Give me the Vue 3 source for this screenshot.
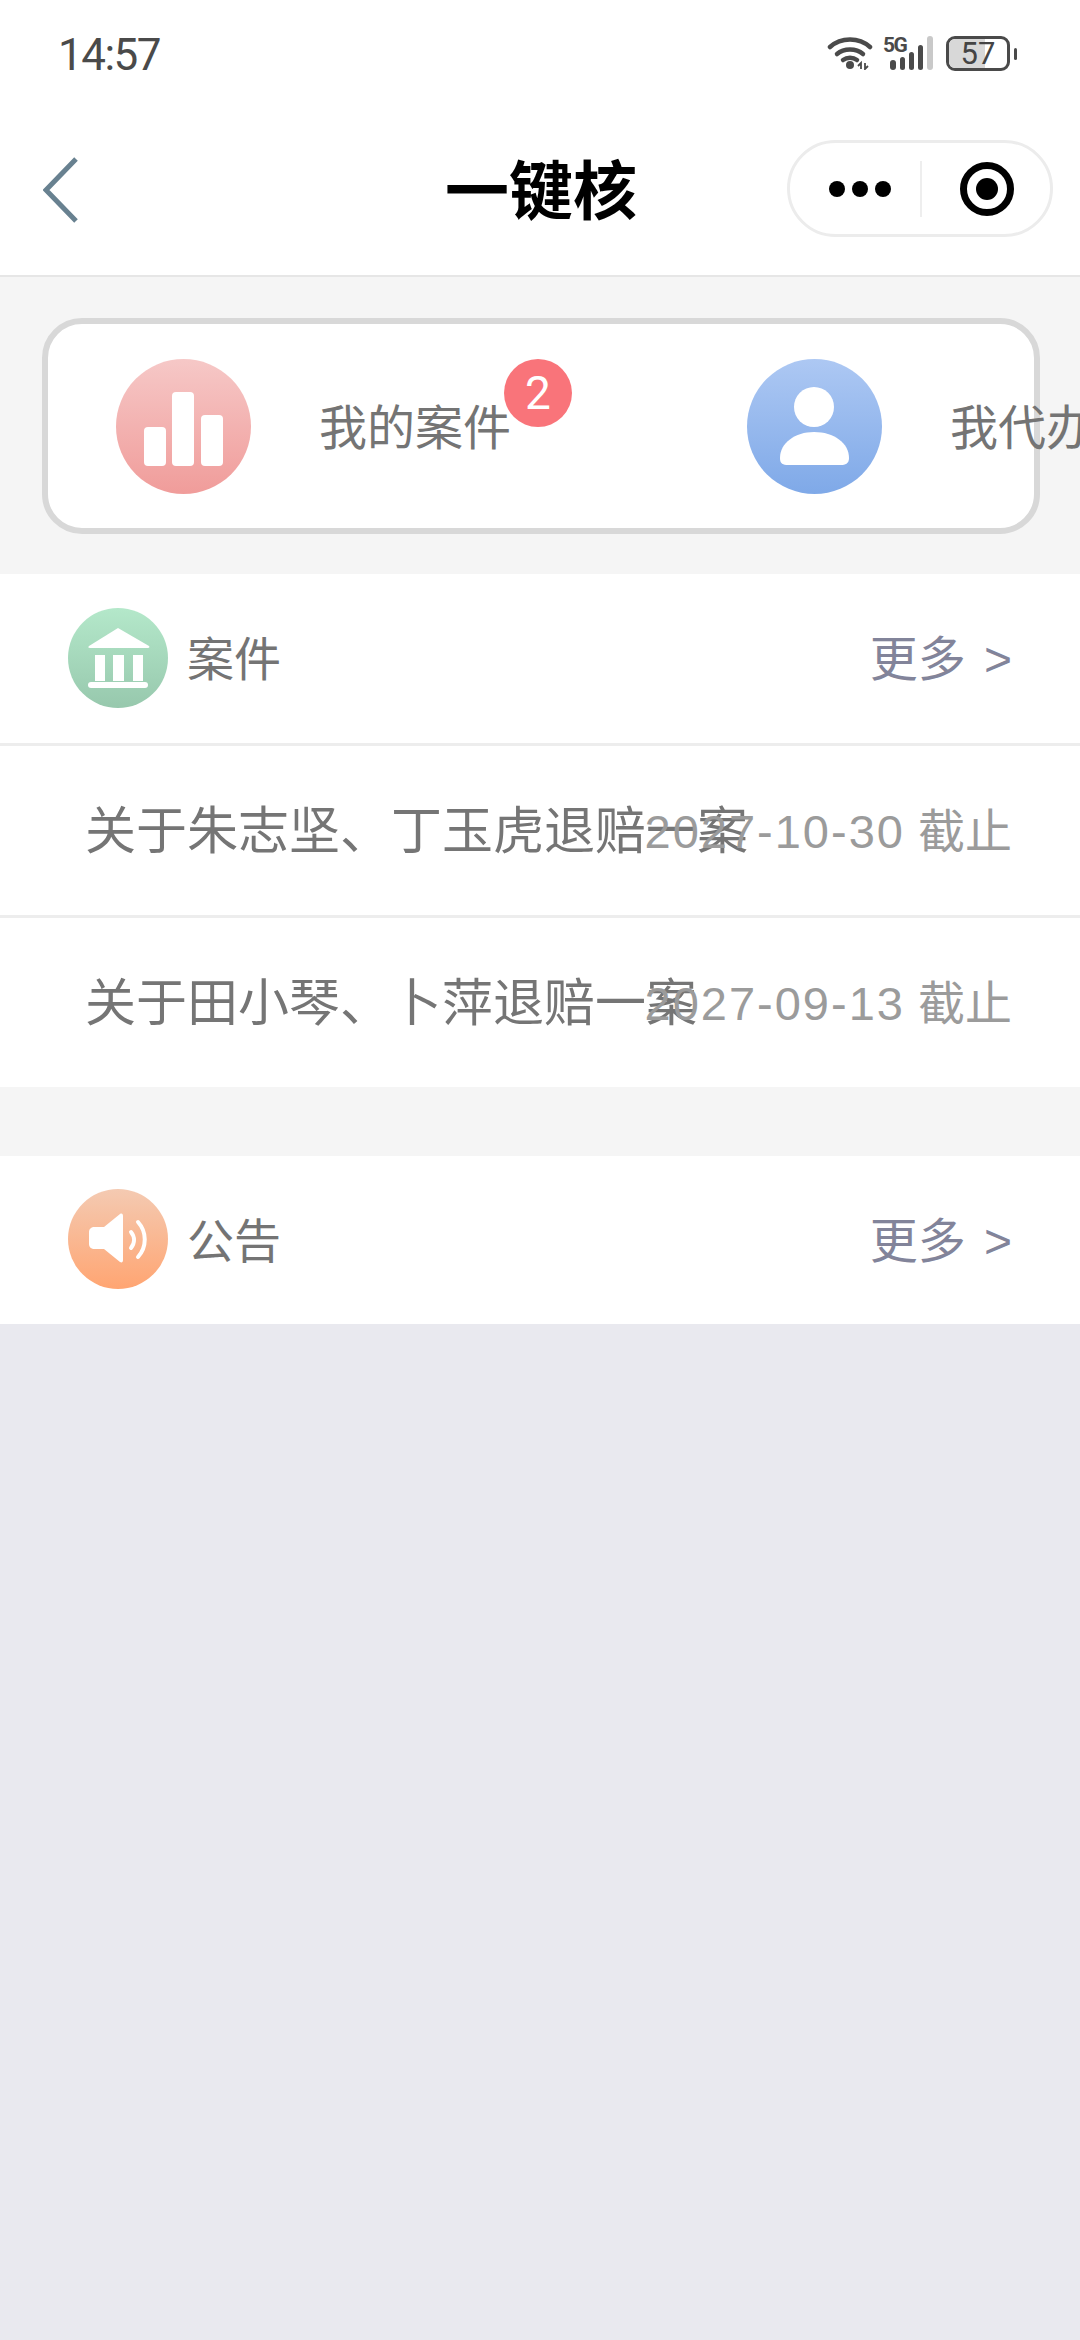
<template>
  <div class="page">
    <!-- 状态栏 -->
    <div class="status-bar">
      <span class="time">14:57</span>
      <div class="status-icons">
        <div class="wifi">
          <svg width="46" height="34" viewBox="0 0 46 34">
            <g fill="none" stroke="#4a4a4a" stroke-width="4.5" stroke-linecap="round">
              <path d="M3 11C14 1 32 1 43 11" />
              <path d="M10 18C17 12 29 12 36 18" />
              <path d="M16 24C20 21 26 21 30 24" />
            </g>
            <circle cx="23" cy="29" r="4" fill="#4a4a4a" />
            <path d="M34 33V27l-3 3M38 27v6l3-3" fill="none" stroke="#4a4a4a" stroke-width="1.8" />
          </svg>
        </div>
        <div class="signal">
          <span class="five-g">5G</span>
          <svg class="signal-bars" width="43" height="34" viewBox="0 0 43 34">
            <rect x="0" y="24" width="6" height="10" rx="3" fill="#4a4a4a" />
            <rect x="10" y="21" width="5" height="13" rx="2.5" fill="#4a4a4a" />
            <rect x="19" y="16" width="5" height="18" rx="2.5" fill="#4a4a4a" />
            <rect x="28" y="9" width="5" height="25" rx="2.5" fill="#4a4a4a" />
            <rect x="37" y="0" width="6" height="34" rx="3" fill="#c9c9c9" />
          </svg>
        </div>
        <div class="battery">
          <div class="battery-fill"></div>
          <span class="battery-num">57</span>
        </div>
        <div class="battery-nub"></div>
      </div>
    </div>

    <!-- 导航栏 -->
    <div class="nav-bar">
      <svg class="back" width="36" height="66" viewBox="0 0 36 66">
        <path d="M33 2L3 33l30 31" fill="none" stroke="#688190" stroke-width="5" />
      </svg>
      <h1 class="nav-title">一键核</h1>
      <div class="capsule">
        <div class="dots"><i></i><i></i><i></i></div>
        <div class="capsule-line"></div>
        <svg width="56" height="56" viewBox="0 0 56 56">
          <circle cx="28" cy="28" r="23.5" fill="none" stroke="#000" stroke-width="7" />
          <circle cx="28" cy="28" r="11" fill="#000" />
        </svg>
      </div>
    </div>

    <!-- 快捷入口 -->
    <div class="entry-wrap">
      <div class="entry-card">
        <div class="entry-item">
          <div class="entry-icon pink">
            <svg width="135" height="135" viewBox="0 0 135 135" fill="#fff">
              <rect x="28" y="68" width="22" height="39" rx="4" />
              <rect x="56" y="33" width="22" height="74" rx="4" />
              <rect x="85" y="56" width="22" height="51" rx="4" />
            </svg>
          </div>
          <span class="entry-text">我的案件<b class="badge">2</b></span>
        </div>
        <div class="entry-item">
          <div class="entry-icon blue">
            <svg width="135" height="135" viewBox="0 0 135 135" fill="#fff">
              <circle cx="67" cy="48" r="20" />
              <path d="M33 99C33 84 48 73 67 73C87 73 102 84 102 99C102 105 98 106 94 106L41 106C36 106 33 105 33 99Z" />
            </svg>
          </div>
          <span class="entry-text">我代办</span>
        </div>
      </div>
    </div>

    <!-- 案件 -->
    <div class="section">
      <div class="section-head">
        <div class="head-icon green">
          <svg width="100" height="100" viewBox="0 0 100 100" fill="#fff">
            <path d="M50 20L81 38C82 39 81 40 80 40H22C20 40 20 39 21 38Z" />
            <rect x="27" y="47" width="10" height="26" />
            <rect x="45" y="47" width="11" height="26" />
            <rect x="65" y="47" width="10" height="26" />
            <rect x="20" y="74" width="60" height="6" rx="3" />
          </svg>
        </div>
        <span class="head-title">案件</span>
        <span class="more">更多 &gt;</span>
      </div>
      <div v-for="item in cases" :key="item.title" class="case-row">
        <span class="case-title">{{ item.title }}</span>
        <span class="case-date"><span class="date-num">{{ item.date }}</span> 截止</span>
      </div>
    </div>

    <!-- 公告 -->
    <div class="section notice">
      <div class="section-head no-line">
        <div class="head-icon orange">
          <svg width="100" height="100" viewBox="0 0 100 100">
            <path d="M27 38H36L52 25C54 24 55 25 55 27V71C55 73 54 74 52 73L36 60H27C23 60 21 58 21 55V43C21 40 23 38 27 38Z" fill="#fff" />
            <g fill="none" stroke="#fff" stroke-width="4" stroke-linecap="round">
              <path d="M63 43C67 48 67 54 63 59" />
              <path d="M70 33C79 43 79 58 70 68" />
            </g>
          </svg>
        </div>
        <span class="head-title">公告</span>
        <span class="more">更多 &gt;</span>
      </div>
    </div>
  </div>
</template>

<script setup>
const cases = [
  { title: "关于朱志坚、丁玉虎退赔一案", date: "2027-10-30" },
  { title: "关于田小琴、卜萍退赔一案", date: "2027-09-13" },
];
</script>

<style>
html,
body {
  margin: 0;
  overflow-x: hidden;
}
</style>

<style scoped>
.page {
  width: 1080px;
  min-height: 2340px;
  overflow: hidden;
  background: #e9e9ef;
  font-family: "Liberation Sans", "Noto Sans CJK SC", sans-serif;
}

/* 状态栏 */
.status-bar {
  height: 90px;
  box-sizing: border-box;
  padding: 34px 63px 0 58px;
  background: #fff;
  display: flex;
  justify-content: space-between;
  align-items: flex-start;
}

.time {
  font-family: Roboto, sans-serif;
  font-size: 44px;
  line-height: 42px;
  letter-spacing: -1.5px;
  color: #4a4a4a;
}

.status-icons {
  display: flex;
  align-items: flex-start;
  padding-top: 2px;
}

.wifi {
  width: 46px;
  height: 34px;
  margin-right: 10px;
}

.signal {
  position: relative;
  width: 50px;
  height: 34px;
  margin-right: 13px;
}

.five-g {
  position: absolute;
  left: 0;
  top: -1px;
  font-family: Roboto, sans-serif;
  font-size: 21px;
  line-height: 20px;
  font-weight: 700;
  color: #4a4a4a;
  letter-spacing: -1.5px;
}

.signal-bars {
  position: absolute;
  left: 7px;
  top: 0;
}

.battery {
  position: relative;
  width: 64px;
  height: 35px;
  box-sizing: border-box;
  border: 3px solid #4a4a4a;
  border-radius: 9px;
  overflow: hidden;
  display: flex;
  align-items: center;
  justify-content: center;
}

.battery-fill {
  position: absolute;
  left: 0;
  top: 0;
  bottom: 0;
  width: 36px;
  background: #d8d8d8;
}

.battery-num {
  position: relative;
  font-family: Roboto, sans-serif;
  font-size: 31px;
  line-height: 30px;
  color: #444;
}

.battery-nub {
  width: 3px;
  height: 12px;
  margin: 12px 0 0 4px;
  border-radius: 2px;
  background: #4a4a4a;
}

/* 导航栏 */
.nav-bar {
  position: relative;
  height: 187px;
  box-sizing: border-box;
  background: #fff;
  border-bottom: 2px solid #e6e6e6;
  display: flex;
  align-items: center;
  padding: 0 27px 0 43px;
}

.back {
  margin-top: 15px;
}

.nav-title {
  position: absolute;
  left: 0;
  right: 0;
  top: 64px;
  margin: 0;
  text-align: center;
  font-size: 64px;
  line-height: 76px;
  font-weight: 700;
  color: #000;
  pointer-events: none;
  transform: translateX(1px);
}

.capsule {
  margin-left: auto;
  margin-top: 12px;
  width: 266px;
  height: 97px;
  box-sizing: border-box;
  border: 3px solid #ececec;
  border-radius: 49px;
  display: flex;
  align-items: center;
  padding-left: 39px;
}

.dots {
  display: flex;
  gap: 7px;
}

.dots i {
  width: 16px;
  height: 16px;
  border-radius: 50%;
  background: #000;
}

.capsule-line {
  width: 2px;
  height: 56px;
  margin: 0 37px 0 29px;
  background: #eee;
}

/* 快捷入口 */
.entry-wrap {
  background: #f5f5f5;
  padding: 41px 40px 40px 42px;
}

.entry-card {
  height: 216px;
  box-sizing: border-box;
  padding: 35px 0 0 68px;
  border: 6px solid #d8d8d8;
  border-radius: 40px;
  background: #fff;
  display: flex;
}

.entry-item {
  flex: 0 0 631px;
  display: flex;
  align-items: center;
  height: 135px;
}

.entry-icon {
  flex: 0 0 135px;
  width: 135px;
  height: 135px;
  border-radius: 50%;
}

.entry-icon svg,
.head-icon svg {
  display: block;
}

.pink {
  background: linear-gradient(#f6c8c7, #f09c9a);
}

.blue {
  background: linear-gradient(#adc8f3, #7fa9e8);
}

.green {
  background: linear-gradient(#b4e8ca, #97c8ad);
}

.orange {
  background: linear-gradient(#f4cab2, #ffa572);
}

.entry-text {
  position: relative;
  top: 2px;
  margin-left: 68px;
  font-size: 48px;
  line-height: 60px;
  color: #747474;
  white-space: nowrap;
}

.badge {
  position: absolute;
  left: 185px;
  top: -40px;
  width: 68px;
  height: 68px;
  border-radius: 50%;
  background: #f9747a;
  color: #fff;
  font-family: Roboto, sans-serif;
  font-size: 46px;
  line-height: 68px;
  font-weight: 400;
  text-align: center;
}

/* 列表 */
.section {
  background: #fff;
}

.notice {
  border-top: 69px solid #f5f5f5;
}

.section-head {
  height: 169px;
  border-bottom: 3px solid #ededed;
  padding: 0 68px;
  display: flex;
  align-items: center;
}

.no-line {
  height: 168px;
  border-bottom: 0;
}

.head-icon {
  flex: 0 0 100px;
  width: 100px;
  height: 100px;
  margin-top: -2px;
  border-radius: 50%;
}

.head-title {
  margin-left: 19px;
  padding-top: 3px;
  font-size: 47px;
  line-height: 60px;
  color: #747474;
}

.more {
  margin-left: auto;
  padding-top: 3px;
  font-size: 48px;
  line-height: 60px;
  word-spacing: 5px;
  color: #82849a;
  white-space: nowrap;
}

.case-row {
  height: 169px;
  padding: 0 68px 0 85px;
  border-bottom: 3px solid #ededed;
  display: flex;
  align-items: center;
  white-space: nowrap;
}

.case-row:last-child {
  border-bottom: 0;
}

.case-title {
  width: 0;
  flex: 1 1 0;
  padding-top: 3px;
  font-size: 51px;
  line-height: 60px;
  color: #757575;
}

.case-date {
  flex: none;
  padding-top: 3px;
  font-size: 47px;
  line-height: 60px;
  color: #9b9b9b;
}

.date-num {
  letter-spacing: 2px;
}
</style>
